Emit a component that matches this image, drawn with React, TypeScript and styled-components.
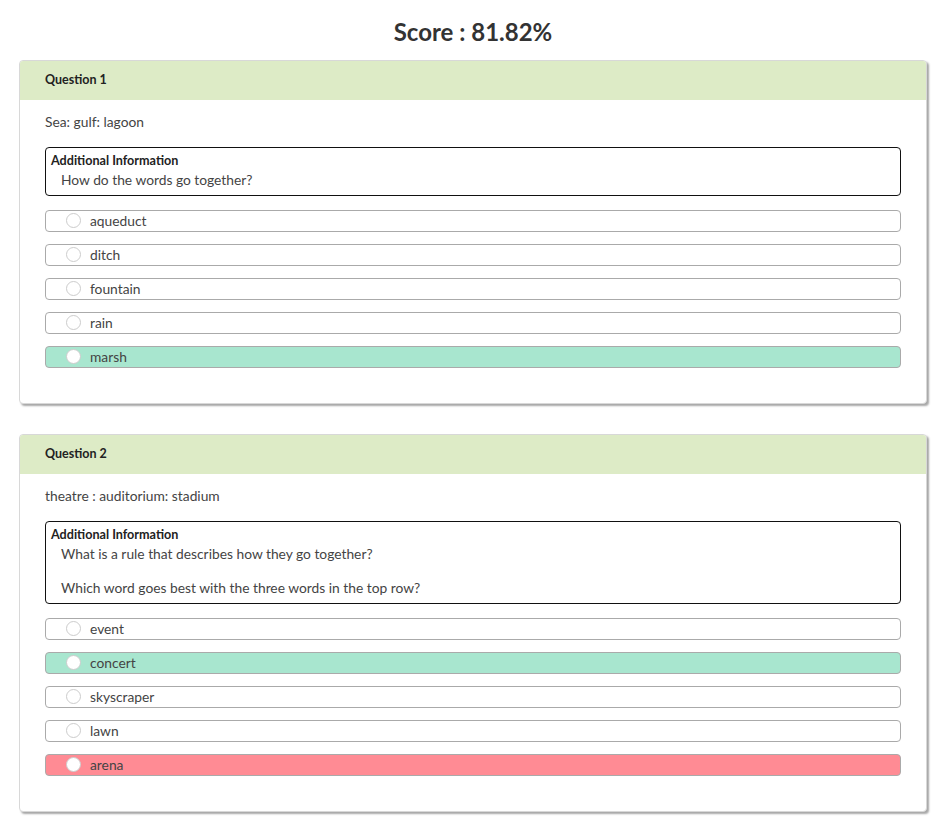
import React from "react";
import styled, { createGlobalStyle } from "styled-components";

const Global = createGlobalStyle`
  html, body { margin: 0; padding: 0; background: #fff; }
  body { font-family: Lato, "Noto Sans", sans-serif; color: #444; }
`;

const Page = styled.div`
  padding: 0 19px 20px 19px;
`;

const Title = styled.h1`
  margin: 0;
  padding-top: 16px;
  margin-bottom: 12px;
  font-family: Lato, sans-serif;
  font-weight: 700;
  font-size: 24px;
  line-height: 32px;
  color: #333;
  text-align: center;
`;

const Card = styled.section`
  background: #fff;
  border: 1px solid #d8d8d8;
  border-radius: 4px;
  box-shadow: 2px 2px 2px rgba(0, 0, 0, 0.35);
  margin-bottom: 30px;
  overflow: hidden;
`;

const Header = styled.div`
  background: #ddebc6;
  height: 39px;
  box-sizing: border-box;
  padding-bottom: 3px;
  display: flex;
  align-items: center;
  padding-left: 25px;
  font-size: 12.5px;
  font-weight: 700;
  color: #222;
`;

const Body = styled.div`
  padding: 13px 25px 35px 25px;
`;

const QuestionText = styled.div`
  font-size: 13.8px;
  line-height: 18px;
  color: #444;
  margin-bottom: 16px;
`;

const InfoBox = styled.div`
  border: 1px solid #111;
  border-radius: 4px;
  padding: 5px 5px 7px 5px;
  margin-bottom: 14px;
`;

const InfoLabel = styled.div`
  font-size: 12.6px;
  line-height: 16px;
  font-weight: 700;
  color: #222;
`;

const InfoContent = styled.div`
  padding: 2px 0 0 10px;
  font-size: 13.8px;
  line-height: 17px;
  color: #444;
  white-space: pre-wrap;
`;

const Options = styled.div`
  display: flex;
  flex-direction: column;
  gap: 12px;
`;

const Option = styled.div<{ $state?: "correct" | "wrong" }>`
  height: 20px;
  box-sizing: content-box;
  border: 1px solid #aaa;
  border-radius: 4px;
  display: flex;
  align-items: center;
  padding-left: 20px;
  background: ${(p) =>
    p.$state === "correct" ? "#a8e6cf" : p.$state === "wrong" ? "#ff8b94" : "#fff"};
  font-size: 13.8px;
  color: #444;
`;

const OptionLabel = styled.span`
  margin-top: -2px;
`;

const Radio = styled.span`
  width: 13px;
  height: 13px;
  border-radius: 50%;
  border: 1px solid #ccc;
  background: #fff;
  margin-right: 9px;
  margin-top: -2px;
  flex: none;
`;

type Q = {
  title: string;
  text: string;
  info: string;
  options: { label: string; state?: "correct" | "wrong" }[];
};

const questions: Q[] = [
  {
    title: "Question 1",
    text: "Sea: gulf: lagoon",
    info: "How do the words go together?",
    options: [
      { label: "aqueduct" },
      { label: "ditch" },
      { label: "fountain" },
      { label: "rain" },
      { label: "marsh", state: "correct" },
    ],
  },
  {
    title: "Question 2",
    text: "theatre : auditorium: stadium",
    info: "What is a rule that describes how they go together?\n\nWhich word goes best with the three words in the top row?",
    options: [
      { label: "event" },
      { label: "concert", state: "correct" },
      { label: "skyscraper" },
      { label: "lawn" },
      { label: "arena", state: "wrong" },
    ],
  },
];

export default function App() {
  return (
    <>
      <Global />
      <Page>
        <Title>Score : 81.82%</Title>
        {questions.map((q) => (
          <Card key={q.title}>
            <Header>{q.title}</Header>
            <Body>
              <QuestionText>{q.text}</QuestionText>
              <InfoBox>
                <InfoLabel>Additional Information</InfoLabel>
                <InfoContent>{q.info}</InfoContent>
              </InfoBox>
              <Options>
                {q.options.map((o) => (
                  <Option key={o.label} $state={o.state}>
                    <Radio />
                    <OptionLabel>{o.label}</OptionLabel>
                  </Option>
                ))}
              </Options>
            </Body>
          </Card>
        ))}
      </Page>
    </>
  );
}
